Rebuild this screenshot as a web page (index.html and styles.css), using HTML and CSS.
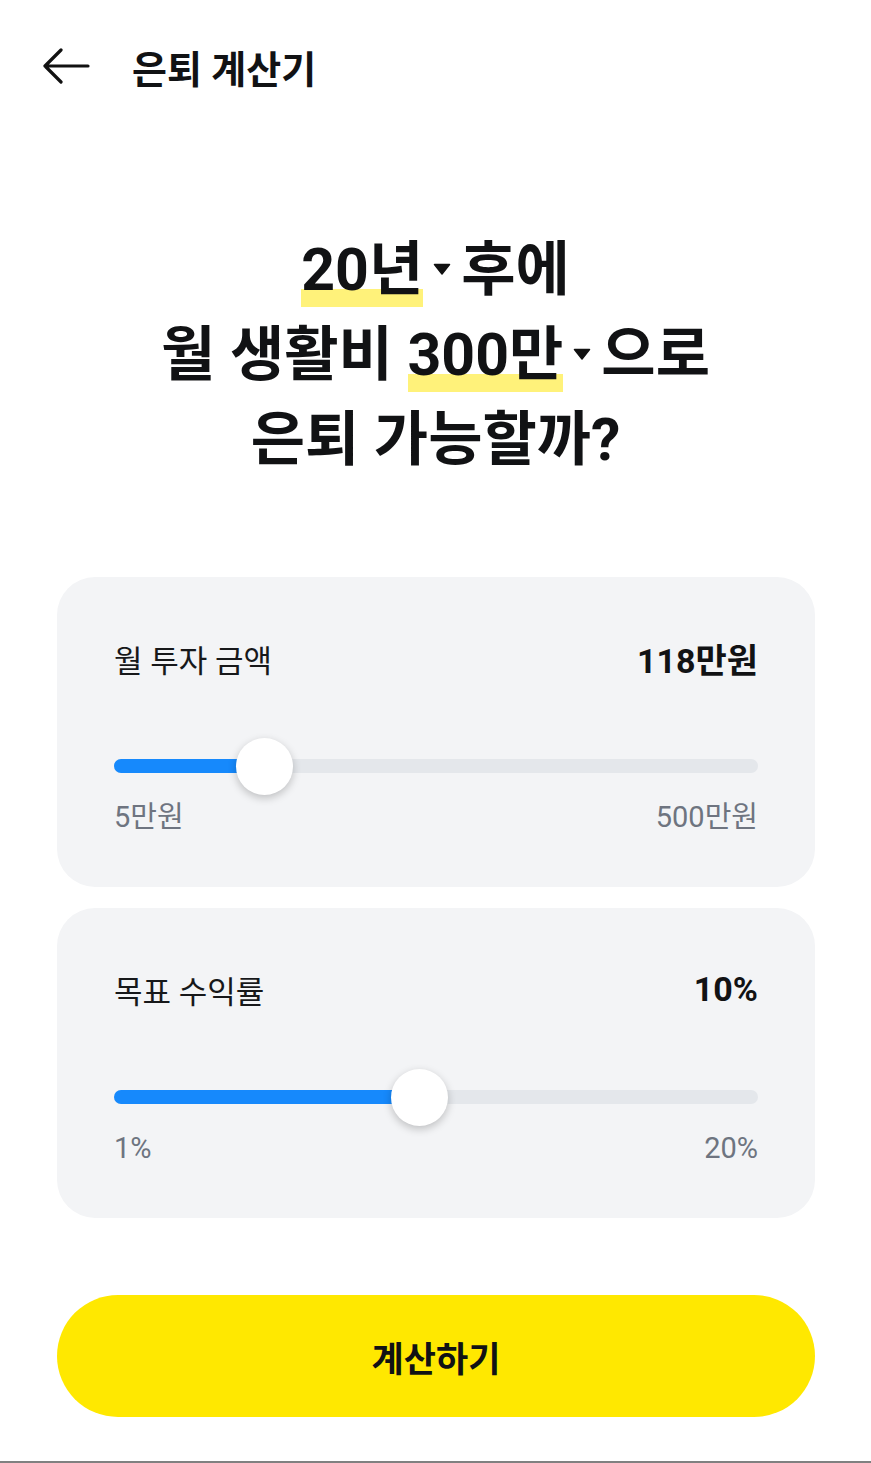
FILE: index.html
```html
<!DOCTYPE html>
<html lang="ko">
<head>
<meta charset="utf-8">
<title>은퇴 계산기</title>
<link rel="stylesheet" href="styles.css">
</head>
<body>
<div class="page">
  <header class="header">
    <svg class="back" width="48" height="36" viewBox="0 0 48 36" aria-hidden="true">
      <path d="M46 18H3M19 2L3 18l16 16" fill="none" stroke="#111" stroke-width="3.2" stroke-linecap="round" stroke-linejoin="round"/>
    </svg>
    <h1 class="title">은퇴 계산기</h1>
  </header>

  <section class="headline">
    <div class="line"><span class="hl">20년</span><svg class="caret" width="18" height="12" viewBox="0 0 18 12"><path d="M1.5 1.5h15L9 11z" fill="#111" stroke="#111" stroke-width="1.5" stroke-linejoin="round"/></svg>후에</div>
    <div class="line">월 생활비 <span class="hl">300만</span><svg class="caret" width="18" height="12" viewBox="0 0 18 12"><path d="M1.5 1.5h15L9 11z" fill="#111" stroke="#111" stroke-width="1.5" stroke-linejoin="round"/></svg>으로</div>
    <div class="line">은퇴 가능할까?</div>
  </section>

  <section class="card">
    <div class="row">
      <span class="label">월 투자 금액</span>
      <span class="value">118만원</span>
    </div>
    <div class="slider">
      <div class="track">
        <div class="fill" style="width: 23.3%"></div>
        <div class="thumb" style="left: 23.3%"></div>
      </div>
    </div>
    <div class="range">
      <span>5만원</span>
      <span>500만원</span>
    </div>
  </section>

  <section class="card">
    <div class="row">
      <span class="label">목표 수익률</span>
      <span class="value">10%</span>
    </div>
    <div class="slider">
      <div class="track">
        <div class="fill" style="width: 47.4%"></div>
        <div class="thumb" style="left: 47.4%"></div>
      </div>
    </div>
    <div class="range">
      <span>1%</span>
      <span>20%</span>
    </div>
  </section>

  <button class="cta" type="button">계산하기</button>

  <div class="bottom-line"></div>
</div>
</body>
</html>
```

FILE: styles.css
```css
* {
  box-sizing: border-box;
}

html, body {
  margin: 0;
  padding: 0;
  background: #ffffff;
}

body {
  font-family: Roboto, "Noto Sans CJK KR", "Noto Sans", sans-serif;
  color: #111214;
}

.page {
  width: 871px;
  height: 1463px;
  display: flex;
  flex-direction: column;
  overflow: hidden;
}

.header {
  height: 132px;
  display: flex;
  align-items: center;
  padding-left: 42px;
}

.back {
  display: block;
  flex: none;
}

.title {
  margin: 0 0 0 42px;
  font-size: 38px;
  font-weight: 700;
  color: #111214;
}

.headline {
  margin-top: 95px;
  text-align: center;
  font-size: 59px;
  font-weight: 700;
  line-height: 85px;
}

.line {
  white-space: nowrap;
  height: 85px;
}

.hl {
  display: inline-block;
  line-height: 85px;
  height: 85px;
  vertical-align: top;
  background: linear-gradient(to bottom, transparent 0, transparent 62px, #fff27a 62px, #fff27a 80px, transparent 80px);
}

.caret {
  display: inline-block;
  vertical-align: top;
  margin: 36px 10px 0 10px;
}

.card {
  margin: 95px 56px 0 57px;
  height: 310px;
  background: #f3f4f6;
  border-radius: 38px;
  padding: 60px 57px 0 57px;
}

.card + .card {
  margin-top: 21px;
}

.row {
  display: flex;
  justify-content: space-between;
  align-items: center;
  height: 42px;
}

.label {
  font-size: 31px;
  font-weight: 400;
  color: #17181a;
}

.value {
  font-size: 34px;
  font-weight: 700;
  color: #111214;
}

.slider {
  margin-top: 59px;
  height: 56px;
  display: flex;
  align-items: center;
}

.track {
  position: relative;
  width: 100%;
  height: 14px;
  border-radius: 7px;
  background: #e4e7eb;
}

.fill {
  height: 100%;
  border-radius: 7px;
  background: #1689fc;
}

.thumb {
  position: absolute;
  top: 50%;
  width: 57px;
  height: 57px;
  margin: -28px 0 0 -28px;
  border-radius: 50%;
  background: #ffffff;
  box-shadow: 0 3px 8px rgba(0, 0, 0, 0.22);
}

.range {
  margin-top: 8px;
  display: flex;
  justify-content: space-between;
  font-size: 29px;
  line-height: 30px;
  color: #6e7480;
}

.cta {
  margin: 77px 56px 0 57px;
  height: 122px;
  border: none;
  border-radius: 61px;
  background: #ffe800;
  font-family: Roboto, "Noto Sans CJK KR", sans-serif;
  font-size: 35px;
  font-weight: 700;
  color: #111214;
  padding: 0;
}

.bottom-line {
  margin-top: auto;
  height: 2px;
  background: #808080;
}
```
